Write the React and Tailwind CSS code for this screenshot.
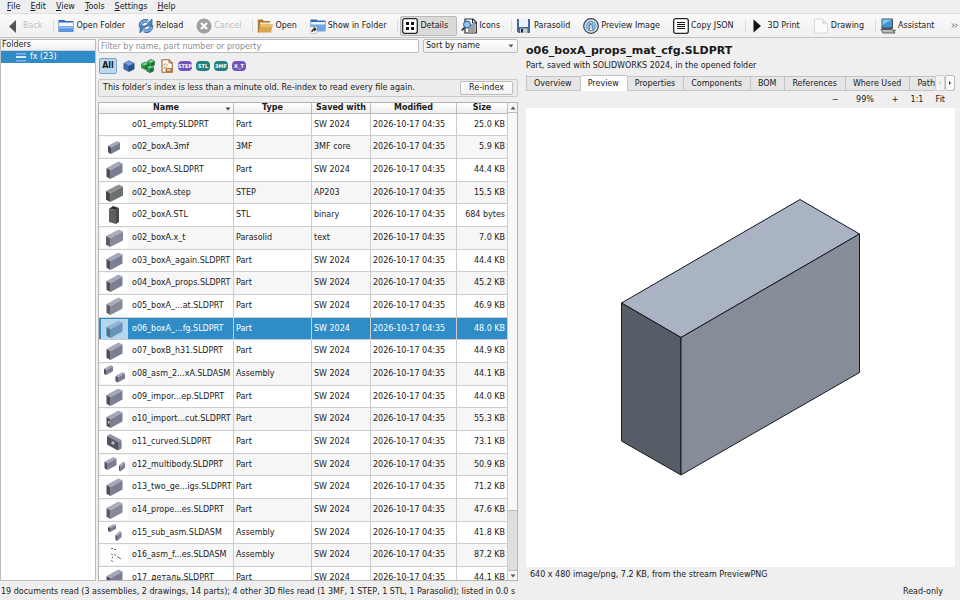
import { useState } from 'react';

const menus = ['File', 'Edit', 'View', 'Tools', 'Settings', 'Help'];

const tabs = ['Overview', 'Preview', 'Properties', 'Components', 'BOM', 'References', 'Where Used', 'Paths'];

const files = [
  { name: 'o01_empty.SLDPRT', type: 'Part', saved: 'SW 2024', size: '25.0 KB', thumb: 'none' },
  { name: 'o02_boxA.3mf', type: '3MF', saved: '3MF core', size: '5.9 KB', thumb: 'small' },
  { name: 'o02_boxA.SLDPRT', type: 'Part', saved: 'SW 2024', size: '44.4 KB', thumb: 'part' },
  { name: 'o02_boxA.step', type: 'STEP', saved: 'AP203', size: '15.5 KB', thumb: 'step' },
  { name: 'o02_boxA.STL', type: 'STL', saved: 'binary', size: '684 bytes', thumb: 'stl' },
  { name: 'o02_boxA.x_t', type: 'Parasolid', saved: 'text', size: '7.0 KB', thumb: 'wide' },
  { name: 'o03_boxA_again.SLDPRT', type: 'Part', saved: 'SW 2024', size: '44.4 KB', thumb: 'part' },
  { name: 'o04_boxA_props.SLDPRT', type: 'Part', saved: 'SW 2024', size: '45.2 KB', thumb: 'part' },
  { name: 'o05_boxA_...at.SLDPRT', type: 'Part', saved: 'SW 2024', size: '46.9 KB', thumb: 'light' },
  { name: 'o06_boxA_...fg.SLDPRT', type: 'Part', saved: 'SW 2024', size: '48.0 KB', thumb: 'picked' },
  { name: 'o07_boxB_h31.SLDPRT', type: 'Part', saved: 'SW 2024', size: '44.9 KB', thumb: 'part' },
  { name: 'o08_asm_2...xA.SLDASM', type: 'Assembly', saved: 'SW 2024', size: '44.1 KB', thumb: 'pair' },
  { name: 'o09_impor...ep.SLDPRT', type: 'Part', saved: 'SW 2024', size: '44.0 KB', thumb: 'part' },
  { name: 'o10_import...cut.SLDPRT', type: 'Part', saved: 'SW 2024', size: '55.3 KB', thumb: 'cut' },
  { name: 'o11_curved.SLDPRT', type: 'Part', saved: 'SW 2024', size: '73.1 KB', thumb: 'curved' },
  { name: 'o12_multibody.SLDPRT', type: 'Part', saved: 'SW 2024', size: '50.9 KB', thumb: 'multi' },
  { name: 'o13_two_ge...igs.SLDPRT', type: 'Part', saved: 'SW 2024', size: '71.2 KB', thumb: 'part' },
  { name: 'o14_prope...es.SLDPRT', type: 'Part', saved: 'SW 2024', size: '47.6 KB', thumb: 'light' },
  { name: 'o15_sub_asm.SLDASM', type: 'Assembly', saved: 'SW 2024', size: '41.8 KB', thumb: 'sub' },
  { name: 'o16_asm_f...es.SLDASM', type: 'Assembly', saved: 'SW 2024', size: '87.2 KB', thumb: 'scatter' },
  { name: 'o17_деталь.SLDPRT', type: 'Part', saved: 'SW 2024', size: '44.1 KB', thumb: 'part' },
];

const steel = ['#a3a7ba', '#7b7e93', '#4b4d5b'];
const grey = ['#8d9190', '#6c7071', '#444848'];
const pale = ['#a9adba', '#858998', '#5a5d69'];
const blue = ['#8fb4d4', '#6a93b8', '#44708f'];

// Isometric block drawn in a w x h area at x, y
function Block({ x, y, w, h, c }) {
  const fx = x + w * 0.25;
  const r = x + w;
  const b = y + h;
  return (
    <g>
      <polygon fill={c[0]} points={`${x},${y + h * 0.37} ${x + w * 0.75},${y} ${r},${y + h * 0.12} ${fx},${y + h * 0.5}`} />
      <polygon fill={c[1]} points={`${fx},${y + h * 0.5} ${r},${y + h * 0.12} ${r},${y + h * 0.63} ${fx},${b}`} />
      <polygon fill={c[2]} points={`${x},${y + h * 0.37} ${fx},${y + h * 0.5} ${fx},${b} ${x},${y + h * 0.87}`} />
    </g>
  );
}

function Thumb({ kind }) {
  return (
    <svg viewBox="0 0 27 20" className={`h-5 w-[27px] ${kind === 'picked' ? 'bg-[#b4d7ee]' : 'bg-white'}`} aria-hidden="true">
      {kind === 'small' && <Block x={7} y={4} w={12} h={13} c={steel} />}
      {kind === 'part' && <Block x={5.5} y={1.5} w={16} h={17.5} c={steel} />}
      {kind === 'light' && <Block x={5.5} y={1.5} w={16} h={17.5} c={pale} />}
      {kind === 'picked' && <Block x={5.5} y={1.5} w={16} h={17.5} c={blue} />}
      {kind === 'step' && <Block x={5} y={1.5} w={17} h={17.5} c={grey} />}
      {kind === 'wide' && <Block x={5} y={1.5} w={17} h={17.5} c={pale} />}
      {kind === 'stl' && (
        <g>
          <polygon fill="#2e3231" points="8,4 12,1 18,3 15,5" />
          <polygon fill="#5c605f" points="8,4 15,5 15,19 8,17" />
          <polygon fill="#464a49" points="15,5 18,3 18,17 15,19" />
        </g>
      )}
      {kind === 'pair' && (
        <g>
          <Block x={3} y={1} w={9} h={10} c={steel} />
          <Block x={14.5} y={8} w={9.5} h={10.5} c={steel} />
        </g>
      )}
      {kind === 'cut' && (
        <g>
          <Block x={5.5} y={1.5} w={16} h={17.5} c={steel} />
          <rect x={7} y={12} width={1.5} height={2.5} fill="#c9cbd6" />
        </g>
      )}
      {kind === 'curved' && (
        <g>
          <polygon fill="#8d90a3" points="6,4 9,2 20.500,8 17,10" />
          <polygon fill="#50535f" points="6,4 17,10 17,18.500 6,12.500" />
          <polygon fill="#777a8c" points="17,10 20.500,8 20.500,16.500 17,18.500" />
          <circle cx={12} cy={11} r={1.7} fill="#b9bcc8" />
        </g>
      )}
      {kind === 'multi' && (
        <g>
          <Block x={3.5} y={2} w={12} h={13} c={steel} />
          <Block x={18} y={6.5} w={6} h={10} c={steel} />
        </g>
      )}
      {kind === 'sub' && (
        <g>
          <Block x={7} y={1} w={8} h={8} c={steel} />
          <Block x={14.5} y={8} w={6} h={10} c={steel} />
        </g>
      )}
      {kind === 'scatter' && (
        <g stroke="#6b6d76" strokeWidth="1" fill="none">
          <path d="M10 3.500h2M13 4.500h2M10 9l2 1M13 9.500l2 1M16 11.500l4 2.500M12 11.500l-1 2M10 15.500l2 1" />
        </g>
      )}
    </svg>
  );
}

function BackIcon() {
  return (
    <svg viewBox="0 0 16 16" className="size-4"><path d="M11 2v13L4 8.500z" fill="#555" /></svg>
  );
}

function FolderBlueIcon() {
  return (
    <svg viewBox="0 0 16 16" className="size-4">
      <path d="M.5 2h6l1 1h8v5H.5z" fill="#3468b8" />
      <rect x="1" y="4.500" width="14" height="4" fill="#f1f6fc" />
      <rect x=".3" y="8" width="15.400" height="6" rx=".8" fill="#5b93dc" />
      <rect x="1" y="8.500" width="14" height="2" fill="#94bdf0" />
    </svg>
  );
}

function ReloadIcon() {
  return (
    <svg viewBox="0 0 16 16" className="size-4" fill="none" strokeLinecap="butt">
      <path d="M2.500 8.500C2 4.500 6 1.500 10 3.500" stroke="#2a5b95" strokeWidth="3.500" />
      <path d="M13.500 7.500c.5 4-3.500 7-7.500 5" stroke="#2a5b95" strokeWidth="3.500" />
      <path d="M2.500 8.500C2 4.500 6 1.500 10 3.500" stroke="#79aede" strokeWidth="2" />
      <path d="M13.500 7.500c.5 4-3.500 7-7.500 5" stroke="#79aede" strokeWidth="2" />
      <path d="M14 1v7H7.500z" fill="#4d88c4" stroke="#2a5b95" strokeWidth=".7" />
      <path d="M2 15V8h6.500z" fill="#4d88c4" stroke="#2a5b95" strokeWidth=".7" />
    </svg>
  );
}

function CancelIcon() {
  return (
    <svg viewBox="0 0 16 16" className="size-4">
      <circle cx="8" cy="8" r="7.500" fill="#a0a0a0" />
      <path d="M5 5l6 6M11 5l-6 6" stroke="#fff" strokeWidth="2.200" />
    </svg>
  );
}

function OpenIcon() {
  return (
    <svg viewBox="0 0 16 16" className="size-4">
      <path d="M.8 1.500h5l1 1.500H13v4H4L2 14.500H.8z" fill="#b07a32" />
      <path d="M3 4.500h11v3H3z" fill="#efe3cb" />
      <path d="M3.500 6h12.200l-1.500 8.500H1.500z" fill="#dba650" />
      <path d="M3.500 6h12.200l-.5 3H3z" fill="#e8bd78" />
    </svg>
  );
}

function ShowFolderIcon() {
  return (
    <svg viewBox="0 0 16 16" className="size-4">
      <path d="M.5 1.500h6l1 1h8v5H.5z" fill="#3468b8" />
      <rect x="1" y="4" width="14" height="3" fill="#e9f1fb" />
      <rect x=".5" y="6.500" width="15.200" height="7" rx=".8" fill="#6ea5e8" />
      <rect x="0" y="8.500" width="7" height="7" rx="1" fill="#f4f4f4" stroke="#888" strokeWidth=".4" />
      <path d="M2 14c0-2 1-3 3-3M3.500 9.500L5.800 11l-2 2" stroke="#222" strokeWidth="1.200" fill="none" />
    </svg>
  );
}

function DetailsIcon() {
  return (
    <svg viewBox="0 0 16 16" className="size-4">
      <rect x=".7" y=".7" width="14.600" height="14.600" rx="2" fill="#fff" stroke="#222b33" strokeWidth="1.300" />
      <path d="M4 4h3v3H4zM9 4h3v3H9zM4 9h3v3H4zM9 9h3v3H9z" fill="#111" />
    </svg>
  );
}

function IconsIcon() {
  return (
    <svg viewBox="0 0 16 16" className="size-4">
      <path d="M4 1h8l3.300 3.300V15H4z" fill="#fafafa" stroke="#222b33" strokeWidth="1.200" />
      <path d="M11.500 1v4h4" fill="none" stroke="#222b33" />
      <path d="M9 7h5M9 9h5M7 11h7M7 13h7" stroke="#333" strokeWidth=".9" />
      <circle cx="6" cy="6.500" r="3.500" fill="#8ec6f1" stroke="#245a8c" />
      <path d="M3.500 9.500L.8 12.500" stroke="#222" strokeWidth="1.600" />
    </svg>
  );
}

function SaveIcon() {
  return (
    <svg viewBox="0 0 16 16" className="size-4">
      <path d="M1 1h13v14H2.500L1 13.500z" fill="#3e6aa8" />
      <rect x="3" y="1" width="9" height="8" fill="#eef2f8" />
      <rect x="4" y="10.500" width="7.500" height="4.500" fill="#c5cad2" />
      <rect x="5" y="11" width="2" height="3.500" fill="#222" />
    </svg>
  );
}

function InfoIcon() {
  return (
    <svg viewBox="0 0 16 16" className="size-4">
      <circle cx="8" cy="8" r="7.300" fill="#e5eff8" stroke="#333c46" strokeWidth="1.200" />
      <circle cx="8" cy="8" r="5.600" fill="#86b5e0" />
      <circle cx="8" cy="4.700" r="1.200" fill="#fff" stroke="#27425e" strokeWidth=".5" />
      <path d="M6.500 7h2.500v4h1v1.500H6V11h1V8.200h-.5z" fill="#fff" stroke="#27425e" strokeWidth=".5" />
    </svg>
  );
}

function CopyIcon() {
  return (
    <svg viewBox="0 0 16 16" className="size-4">
      <rect x=".7" y=".7" width="14.600" height="14.600" rx="2" fill="#fff" stroke="#222b33" strokeWidth="1.300" />
      <path d="M4 4.500h8M4 6.500h8M4 8.500h8M4 10.500h8" stroke="#111" strokeWidth="1.200" />
    </svg>
  );
}

function PlayIcon() {
  return (
    <svg viewBox="0 0 16 16" className="size-4"><path d="M3.500 1.500v13L11 8z" fill="#111" /></svg>
  );
}

function PageIcon() {
  return (
    <svg viewBox="0 0 16 16" className="size-4">
      <path d="M1.500 1h8l5 5v9h-13z" fill="#fcfcfc" stroke="#d2d2d2" strokeWidth=".8" />
      <path d="M9.500 1v5h5z" fill="#e6e6e6" stroke="#d2d2d2" strokeWidth=".6" />
    </svg>
  );
}

function ComputerIcon() {
  return (
    <svg viewBox="0 0 16 16" className="size-4">
      <rect x="1.500" y=".5" width="11.500" height="10.500" rx="1" fill="#444b52" />
      <rect x="2.500" y="1.500" width="9.500" height="8" fill="#3d98d2" />
      <path d="M2.500 1.500h9.500L2.500 7z" fill="#83c5ea" />
      <path d="M1 11.500h11l3 3.500H3z" fill="#b9bcbe" stroke="#444" strokeWidth=".8" />
      <ellipse cx="14.300" cy="12.500" rx="1.500" ry="1" fill="#666" />
    </svg>
  );
}

function ToolButton({ icon, label, pressed, disabled }) {
  return (
    <button
      type="button"
      disabled={disabled}
      aria-pressed={pressed}
      className={`flex h-5 shrink-0 items-center gap-0.5 rounded-xs border pl-px pr-2 whitespace-nowrap ${
        pressed ? 'border-[#b9b9b9] bg-[#dadada]' : 'border-transparent'
      } ${disabled ? 'text-[#bebebe]' : ''}`}
    >
      {icon}
      {label}
    </button>
  );
}

function Separator() {
  return <span className="h-3 w-px shrink-0 bg-[#dcdcdc]" />;
}

function PartIcon() {
  return (
    <svg viewBox="0 0 14 14" className="size-3">
      <polygon points="1,4 7,1 13,4 7,7" fill="#6fa3e6" />
      <polygon points="1,4 7,7 7,13.500 1,10.500" fill="#3a6fbd" />
      <polygon points="13,4 7,7 7,13.500 13,10.500" fill="#24508f" />
      <path d="M1 4l6-3 6 3v6.500l-6 3-6-3zM1 4l6 3 6-3M7 7v6.500" fill="none" stroke="#1b3b6b" strokeWidth=".6" />
    </svg>
  );
}

function AssemblyIcon() {
  const cube = (x, y) => (
    <g transform={`translate(${x} ${y})`}>
      <polygon points="0,1.700 3.500,0 7,1.700 3.500,3.400" fill="#6ed487" />
      <polygon points="0,1.700 3.500,3.400 3.500,7.500 0,5.800" fill="#2f9a4c" />
      <polygon points="7,1.700 3.500,3.400 3.500,7.500 7,5.800" fill="#1c7035" />
      <path d="M0 1.700L3.500 0 7 1.700v4.100L3.500 7.500 0 5.800z" fill="none" stroke="#155628" strokeWidth=".5" />
    </g>
  );
  return (
    <svg viewBox="0 0 14 14" className="size-3.5">
      {cube(6.5, 0.3)}
      {cube(0.5, 3)}
      {cube(5.5, 6.2)}
    </svg>
  );
}

function DrawingIcon() {
  return (
    <svg viewBox="0 0 14 14" className="size-3.5">
      <path d="M2 .7h7l3.300 3.300v9.300H2z" fill="#fff" stroke="#a0662a" strokeWidth="1.100" />
      <path d="M9 .7V4h3.300" fill="none" stroke="#a0662a" />
      <path d="M4 7V5h3v2M4 10V8h3" fill="none" stroke="#c08a55" strokeWidth=".8" />
      <rect x="5.500" y="9" width="6.800" height="4.300" fill="#b9763a" />
      <rect x="7" y="10.300" width="3.500" height="1.200" fill="#fff" />
    </svg>
  );
}

function KindButton({ label, children }) {
  return (
    <button type="button" aria-label={label} className="flex h-4 w-[15px] items-center justify-center">
      {children}
    </button>
  );
}

function FormatChip({ label, color }) {
  return (
    <button type="button" className="flex h-4 w-3.5 items-center justify-center">
      <span className={`flex h-[10px] w-full items-center justify-center rounded-[4px] text-[5px] leading-none font-bold text-white ${color}`}>
        {label}
      </span>
    </button>
  );
}

function FilesPanel() {
  const [selected, setSelected] = useState(9);
  const [query, setQuery] = useState('');

  return (
    <section className="flex w-[420px] shrink-0 flex-col gap-[5px] py-px">
      <div className="flex gap-1">
        <input
          type="text"
          aria-label="Filter"
          placeholder="Filter by name, part number or property"
          value={query}
          onChange={(e) => setQuery(e.target.value)}
          className="h-3.5 min-w-0 flex-1 rounded-xs border border-[#bcbcbc] bg-white px-0.5 outline-none placeholder:text-[#8e8e8e]"
        />
        <div className="relative w-[95px]">
          <select aria-label="Sort" className="block h-3.5 w-full appearance-none rounded-xs border border-[#bcbcbc] bg-linear-to-b from-white to-[#f0f0f0] px-0.5 outline-none">
            <option>Sort by name</option>
            <option>Sort by size</option>
          </select>
          <svg viewBox="0 0 6 4" className="pointer-events-none absolute top-[5px] right-1 h-1 w-1.5">
            <path d="M.5 .5h5L3 3.500z" fill="#555" />
          </svg>
        </div>
      </div>

      <div className="flex h-4 items-center gap-1 px-px">
        <button type="button" className="h-4 w-[18px] rounded-xs border border-[#79a6c8] bg-[#bcd8ec] font-bold">All</button>
        <KindButton label="Parts"><PartIcon /></KindButton>
        <KindButton label="Assemblies"><AssemblyIcon /></KindButton>
        <KindButton label="Drawings"><DrawingIcon /></KindButton>
        <FormatChip label="STEP" color="bg-[#7254b8]" />
        <FormatChip label="STL" color="bg-[#23837c]" />
        <FormatChip label="3MF" color="bg-[#23837c]" />
        <FormatChip label="X_T" color="bg-[#7254b8]" />
      </div>

      <div className="flex h-[18px] items-center justify-between rounded-xs border border-[#cacaca] bg-[#ececec] px-1">
        <span>This folder's index is less than a minute old. Re-index to read every file again.</span>
        <button type="button" className="h-3.5 w-[53px] rounded-xs border border-[#bcbcbc] bg-linear-to-b from-white to-[#f1f1f1]">
          Re-index
        </button>
      </div>

      <div className="flex min-h-0 flex-1 border border-[#b4b4b4] bg-white">
        <div className="min-w-0 flex-1 overflow-hidden">
          <table className="w-full table-fixed border-separate border-spacing-0">
            <colgroup>
              <col />
              <col className="w-[78px]" />
              <col className="w-[59px]" />
              <col className="w-[86px]" />
              <col className="w-[51px]" />
            </colgroup>
            <thead>
              <tr className="h-[11px] bg-linear-to-b from-white to-[#ececec]">
                <th className="relative border-r border-b border-[#bdbdbd] p-0">
                  Name
                  <svg viewBox="0 0 6 4" className="absolute top-1 right-0.5 h-1 w-1.5">
                    <path d="M.5 .5h5L3 3.500z" fill="#444" />
                  </svg>
                </th>
                <th className="border-r border-b border-[#bdbdbd] p-0">Type</th>
                <th className="border-r border-b border-[#bdbdbd] p-0">Saved with</th>
                <th className="border-r border-b border-[#bdbdbd] p-0">Modified</th>
                <th className="border-r border-b border-[#bdbdbd] p-0">Size</th>
              </tr>
            </thead>
            <tbody>
              {files.map((f, i) => (
                <tr
                  key={f.name}
                  onClick={() => setSelected(i)}
                  className={`h-[23px] nth-[3n+1]:h-[22px] [&>td]:border-r [&>td]:border-b [&>td]:border-[#cdcdcd] [&>td]:py-0 ${
                    i === selected ? 'bg-[#308cc6] text-white' : 'odd:bg-white even:bg-[#f6f6f6]'
                  }`}
                >
                  <td className="pr-0 pl-0.5">
                    <div className="flex items-center gap-1 whitespace-nowrap">
                      <Thumb kind={f.thumb} />
                      {f.name}
                    </div>
                  </td>
                  <td className="px-0.5">{f.type}</td>
                  <td className="px-0.5">{f.saved}</td>
                  <td className="px-0.5 whitespace-nowrap">2026-10-17 04:35</td>
                  <td className="px-0.5 text-right whitespace-nowrap">{f.size}</td>
                </tr>
              ))}
            </tbody>
          </table>
        </div>
        <div className="flex w-[9px] shrink-0 flex-col bg-[#dedede]">
          <button type="button" aria-label="Scroll up" className="flex h-[10px] items-center justify-center border-b border-[#bdbdbd] bg-[#f6f6f6]">
            <svg viewBox="0 0 6 4" className="h-1 w-1.5"><path d="M.5 3.500h5L3 .5z" fill="#555" /></svg>
          </button>
          <div className="flex min-h-0 flex-1 flex-col">
            <div className="h-[87%] border-b border-[#bdbdbd] bg-[#f8f8f8]" />
          </div>
          <button type="button" aria-label="Scroll down" className="flex h-[10px] items-center justify-center border-t border-[#bdbdbd] bg-[#f6f6f6]">
            <svg viewBox="0 0 6 4" className="h-1 w-1.5"><path d="M.5 .5h5L3 3.500z" fill="#555" /></svg>
          </button>
        </div>
      </div>
    </section>
  );
}

function DocumentPanel() {
  const [active, setActive] = useState('Preview');

  return (
    <section className="flex min-w-0 flex-1 flex-col pr-[5px] pl-2">
      <h1 className="mt-[7px] text-[11px] leading-3 font-bold">o06_boxA_props_mat_cfg.SLDPRT</h1>
      <p className="mt-1 leading-[10px]">Part, saved with SOLIDWORKS 2024, in the opened folder</p>

      <div className="mt-1 flex h-4 items-end">
        <div role="tablist" className="flex min-w-0 flex-1 items-end overflow-hidden border-l border-[#c4c4c4]">
          {tabs.map((t) => (
            <button
              key={t}
              type="button"
              role="tab"
              aria-selected={t === active}
              onClick={() => setActive(t)}
              className={`shrink-0 border-t border-r border-[#c4c4c4] pr-2 pl-[7px] whitespace-nowrap ${
                t === active ? 'h-4 rounded-t-xs bg-white' : 'h-[15px] border-b bg-[#e6e6e6]'
              }`}
            >
              {t}
            </button>
          ))}
        </div>
        <button type="button" aria-label="Scroll tabs left" className="flex h-4 w-[10px] items-center justify-center rounded-xs border border-[#d0d0d0] bg-[#f4f4f4]">
          <svg viewBox="0 0 4 6" className="h-1.5 w-1"><path d="M3 1v4L1 3z" fill="#c4c4c4" /></svg>
        </button>
        <button type="button" aria-label="Scroll tabs right" className="flex h-4 w-[10px] items-center justify-center rounded-xs border border-[#bcbcbc] bg-[#fafafa]">
          <svg viewBox="0 0 4 6" className="h-1.5 w-1"><path d="M1 1v4l2-2z" fill="#333" /></svg>
        </button>
      </div>

      <div className="flex h-[17px] items-center justify-end pr-[10px]">
        <button type="button" aria-label="Zoom out" className="w-4">−</button>
        <span className="w-11 text-center">99%</span>
        <button type="button" aria-label="Zoom in" className="w-4">+</button>
        <button type="button" className="ml-1.5 w-4">1:1</button>
        <button type="button" className="ml-1 w-4 text-right">Fit</button>
      </div>

      <div className="flex min-h-0 flex-1 items-center justify-center bg-white">
        <svg viewBox="0 0 239 277" className="h-[277px] w-[239px]" stroke="#15181c" strokeWidth="1" strokeLinejoin="round">
          <polygon points="0.500,104 179,0.500 238.500,35 60,138.500" fill="#a9b3c3" />
          <polygon points="0.500,104 60,138.500 60,276 0.500,242" fill="#565d66" />
          <polygon points="60,138.500 238.500,35 238.500,173.500 60,276" fill="#868d99" />
        </svg>
      </div>
      <p className="h-[15px] pl-1 leading-[15px]">640 x 480 image/png, 7.2 KB, from the stream PreviewPNG</p>
    </section>
  );
}

export default function App() {
  return (
    <div className="flex h-screen flex-col overflow-hidden bg-[#efefef] font-['DejaVu_Sans',sans-serif] text-[8px] leading-[10px] text-[#1a1a1a]">
      <nav className="flex h-[13px] shrink-0 items-end gap-[10px] pb-px pl-[7px]">
        {menus.map((m) => (
          <button key={m} type="button">
            <span className="underline underline-offset-1">{m[0]}</span>
            {m.slice(1)}
          </button>
        ))}
      </nav>

      <div className="flex h-[25px] shrink-0 items-center gap-0.5 border-y border-t-[#dedede] border-b-[#c2c2c2] bg-linear-to-b from-[#fafafa] to-[#f0f0f0] pl-[3px]">
        <ToolButton icon={<BackIcon />} label="Back" disabled />
        <Separator />
        <ToolButton icon={<FolderBlueIcon />} label="Open Folder" />
        <ToolButton icon={<ReloadIcon />} label="Reload" />
        <ToolButton icon={<CancelIcon />} label="Cancel" disabled />
        <Separator />
        <ToolButton icon={<OpenIcon />} label="Open" />
        <ToolButton icon={<ShowFolderIcon />} label="Show in Folder" />
        <Separator />
        <ToolButton icon={<DetailsIcon />} label="Details" pressed />
        <ToolButton icon={<IconsIcon />} label="Icons" />
        <Separator />
        <ToolButton icon={<SaveIcon />} label="Parasolid" />
        <ToolButton icon={<InfoIcon />} label="Preview Image" />
        <ToolButton icon={<CopyIcon />} label="Copy JSON" />
        <Separator />
        <ToolButton icon={<PlayIcon />} label="3D Print" />
        <ToolButton icon={<PageIcon />} label="Drawing" />
        <Separator />
        <ToolButton icon={<ComputerIcon />} label="Assistant" />
        <button type="button" aria-label="More tools" className="mr-0.5 ml-auto">
          <svg viewBox="0 0 7 5" className="h-[5px] w-[7px]" fill="none" stroke="#333" strokeWidth=".8">
            <path d="M1 .5l2 2-2 2M4 .5l2 2-2 2" />
          </svg>
        </button>
      </div>

      <main className="flex min-h-0 flex-1">
        <aside className="mt-px mr-0.5 mb-px w-24 shrink-0 border border-[#bdbdbd] bg-white">
          <h2 className="h-[11px] border-b border-[#d0d0d0] bg-linear-to-b from-white to-[#efefef] pl-px">Folders</h2>
          <button type="button" className="flex h-3 w-full items-center gap-1 bg-[#308cc6] pl-[15px] text-white">
            <svg viewBox="0 0 10 10" className="size-2.5">
              <path d="M0 1h10v1.500H0zM0 8h10v1.500H0z" fill="#79b4ea" />
              <rect x="0" y="4" width="10" height="2" fill="#d7e9f9" />
            </svg>
            fx (23)
          </button>
        </aside>
        <FilesPanel />
        <DocumentPanel />
      </main>

      <footer className="flex h-[18px] shrink-0 items-center justify-between pt-px pr-[17px] pl-px whitespace-nowrap">
        <span>19 documents read (3 assemblies, 2 drawings, 14 parts); 4 other 3D files read (1 3MF, 1 STEP, 1 STL, 1 Parasolid); listed in 0.0 s</span>
        <span>Read-only</span>
      </footer>
    </div>
  );
}
